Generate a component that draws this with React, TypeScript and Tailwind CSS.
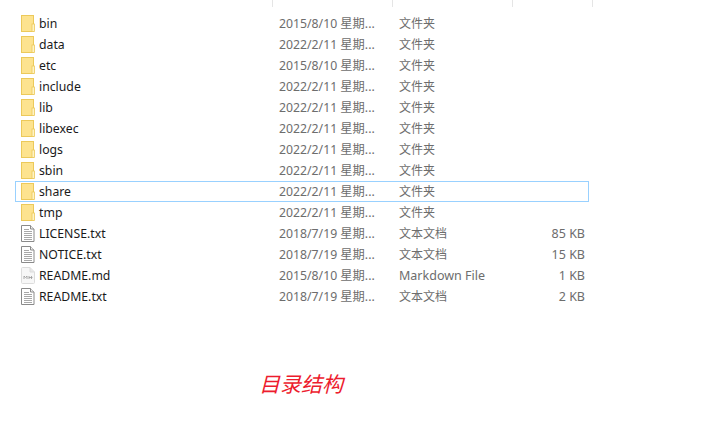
import React from 'react';

type Row = { name: string; date: string; type: string; size?: string; icon: 'folder' | 'text' | 'md'; selected?: boolean };

const rows: Row[] = [
  { name: 'bin', date: '2015/8/10 星期...', type: '文件夹', icon: 'folder' },
  { name: 'data', date: '2022/2/11 星期...', type: '文件夹', icon: 'folder' },
  { name: 'etc', date: '2015/8/10 星期...', type: '文件夹', icon: 'folder' },
  { name: 'include', date: '2022/2/11 星期...', type: '文件夹', icon: 'folder' },
  { name: 'lib', date: '2022/2/11 星期...', type: '文件夹', icon: 'folder' },
  { name: 'libexec', date: '2022/2/11 星期...', type: '文件夹', icon: 'folder' },
  { name: 'logs', date: '2022/2/11 星期...', type: '文件夹', icon: 'folder' },
  { name: 'sbin', date: '2022/2/11 星期...', type: '文件夹', icon: 'folder' },
  { name: 'share', date: '2022/2/11 星期...', type: '文件夹', icon: 'folder', selected: true },
  { name: 'tmp', date: '2022/2/11 星期...', type: '文件夹', icon: 'folder' },
  { name: 'LICENSE.txt', date: '2018/7/19 星期...', type: '文本文档', size: '85 KB', icon: 'text' },
  { name: 'NOTICE.txt', date: '2018/7/19 星期...', type: '文本文档', size: '15 KB', icon: 'text' },
  { name: 'README.md', date: '2015/8/10 星期...', type: 'Markdown File', size: '1 KB', icon: 'md' },
  { name: 'README.txt', date: '2018/7/19 星期...', type: '文本文档', size: '2 KB', icon: 'text' },
];

function FolderIcon() {
  return (
    <svg width="14" height="17" viewBox="0 0 14 17" className="shrink-0">
      <rect x="0.5" y="0.5" width="12" height="16" fill="#fde38f" stroke="#ecc95a" />
      <rect x="11" y="9" width="2.5" height="7.5" fill="#fff3c4" stroke="#ecc95a" strokeWidth="0.8" />
    </svg>
  );
}

function TextIcon() {
  return (
    <svg width="14" height="17" viewBox="0 0 14 17" className="shrink-0">
      <path d="M0.5 0.5H9.5L13 4V16.5H0.5Z" fill="#fff" stroke="#8a8a8a" />
      <path d="M9.5 0.5V4H13" fill="#eee" stroke="#8a8a8a" />
      <path d="M3 4.5H8M3 6.5H11M3 8.5H11M3 10.5H11M3 12.5H11M3 14.5H11" stroke="#a8a8a8" />
    </svg>
  );
}

function MdIcon() {
  return (
    <svg width="14" height="17" viewBox="0 0 14 17" className="shrink-0">
      <path d="M0.5 1.5Q0.5 0.5 1.5 0.5H9L13.5 5V15.5Q13.5 16.5 12.5 16.5H1.5Q0.5 16.5 0.5 15.5Z" fill="#f7f7f7" stroke="#dcdcdc" />
      <path d="M9 0.5V5H13.5" fill="#e8e8e8" stroke="#dcdcdc" />
      <path d="M3 12V9L4.5 10.5L6 9V12M8 9V12M10.5 9V12M8 10.5H11.5" fill="none" stroke="#a0a0a0" strokeWidth="0.9" />
    </svg>
  );
}

export default function App() {
  return (
    <div className="w-[704px] h-[430px] bg-white overflow-hidden text-[12.25px] font-['Noto_Sans','Noto_Sans_CJK_SC',sans-serif]">
      {/* column header edges */}
      <div className="flex h-[7px] pl-[272px]">
        <div className="w-[120px] border-l border-[#e5e5e5]" />
        <div className="w-[120px] border-l border-[#e5e5e5]" />
        <div className="w-[81px] border-x border-[#e5e5e5]" />
      </div>

      <div className="flex flex-col mt-[6px] ml-[15px] w-[574px]">
        {rows.map((row) => (
          <div
            key={row.name}
            className={`flex items-center h-[21px] border ${row.selected ? 'border-[#99d1ff]' : 'border-transparent'}`}
          >
            <div className="flex items-center w-[263px] pl-[5px] gap-[4px] text-[#1a1a1a]">
              {row.icon === 'folder' && <FolderIcon />}
              {row.icon === 'text' && <TextIcon />}
              {row.icon === 'md' && <MdIcon />}
              <span className="pt-[2px]">{row.name}</span>
            </div>
            <div className="w-[120px] pt-[2px] text-[#6d6d6d] whitespace-nowrap">{row.date}</div>
            <div className={`w-[120px] text-[#6d6d6d] whitespace-nowrap ${row.icon === 'md' ? 'text-[12.5px] pt-[2px]' : 'text-[12px]'}`}>{row.type}</div>
            <div className="w-[66px] pt-[2px] text-right text-[12.5px] text-[#6d6d6d] whitespace-nowrap">{row.size}</div>
          </div>
        ))}
      </div>

      <div className="mt-[63px] ml-[259px] text-[21px] leading-[26px] italic text-[#ed1c2e] font-['Noto_Sans_CJK_SC',sans-serif]">
        目录结构
      </div>
    </div>
  );
}
